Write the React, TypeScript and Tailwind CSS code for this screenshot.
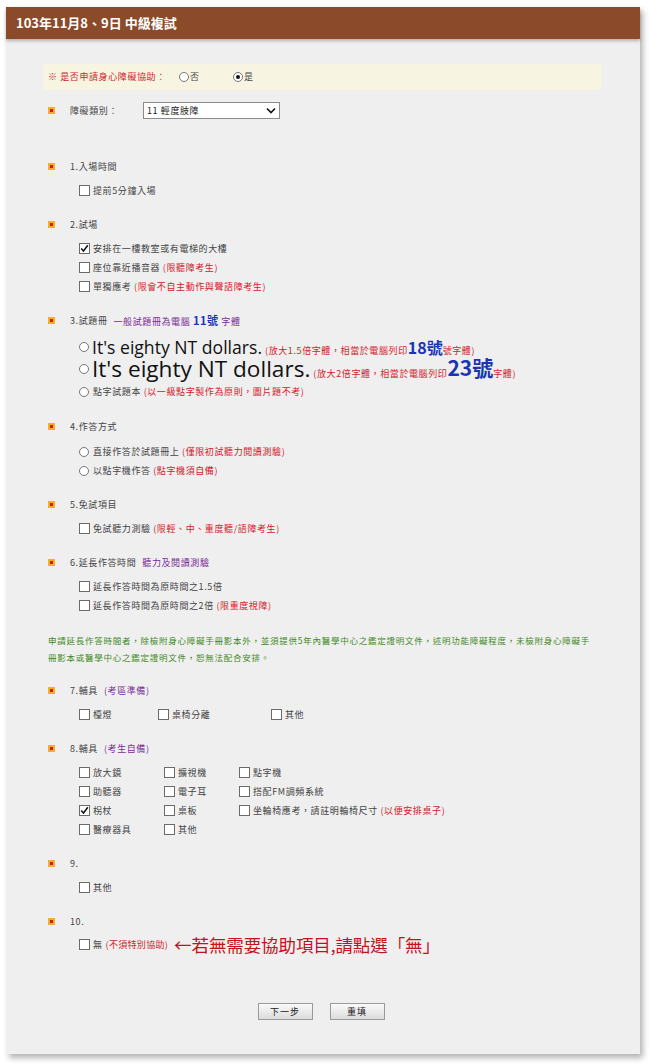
import type { ReactNode } from 'react';

const cjk = "font-['Noto_Sans_CJK_TC','Noto_Sans_CJK_SC',sans-serif]";

function Bullet() {
  return (
    <span className="w-[7px] h-[7px] bg-[#f5ae2a] flex items-center justify-center shrink-0">
      <span className="w-[3px] h-[3px] bg-[#cf1f1a]" />
    </span>
  );
}

function Box({ checked = false }: { checked?: boolean }) {
  return (
    <span className="w-[11px] h-[11px] border border-[#6b6b6b] bg-white shrink-0 flex items-center justify-center">
      {checked && (
        <svg width="9" height="9" viewBox="0 0 9 9">
          <path d="M1.2 4.6 L3.5 7 L7.8 1.2" fill="none" stroke="#111" strokeWidth="1.5" />
        </svg>
      )}
    </span>
  );
}

function Radio({ checked = false }: { checked?: boolean }) {
  return (
    <span className="w-[10px] h-[10px] rounded-full border border-[#777] bg-white shrink-0 flex items-center justify-center">
      {checked && <span className="w-[4px] h-[4px] rounded-full bg-[#111]" />}
    </span>
  );
}

function Note({ children }: { children: ReactNode }) {
  return <span className="text-[#d3202a]">{children}</span>;
}

function Title({ children }: { children: ReactNode }) {
  return (
    <div className="h-[19px] flex items-center pl-[5px]">
      <Bullet />
      <span className="ml-[15px] text-[#444] flex items-center gap-[6px]">{children}</span>
    </div>
  );
}

function Item({ checked, children }: { checked?: boolean; children: ReactNode }) {
  return (
    <div className="h-[19px] flex items-center pl-[36px]">
      <Box checked={checked} />
      <span className="ml-[3px]">{children}</span>
    </div>
  );
}

function RadioItem({ children }: { children: ReactNode }) {
  return (
    <div className="h-[19px] flex items-center pl-[36px]">
      <Radio />
      <span className="ml-[4px]">{children}</span>
    </div>
  );
}

function Cell({ w, checked, children }: { w: string; checked?: boolean; children: ReactNode }) {
  return (
    <div className={`flex items-center ${w}`}>
      <Box checked={checked} />
      <span className="ml-[3px]">{children}</span>
    </div>
  );
}

export default function App() {
  return (
    <div className={`bg-white min-h-[1064px] pl-[6px] pt-[7px] ${cjk}`}>
      <div className="w-[634px] bg-[#efefef] shadow-[3px_4px_6px_rgba(0,0,0,0.3)] pb-[34px] text-[9px] tracking-[0.6px] text-[#444]">
        <div className="h-[32px] bg-[#8b4a29] flex items-center pl-[10px] shadow-[0_2px_3px_rgba(0,0,0,0.25)]">
          <span className="text-white text-[13px] font-bold tracking-normal">103年11月8、9日 中級複試</span>
        </div>

        <div className="pl-[37px] pr-[39px]">
          <div className="mt-[25px] h-[26px] bg-[#f7f5e1] flex items-center pl-[5px]">
            <span className="text-[#d3202a] w-[131px]">※ 是否申請身心障礙協助：</span>
            <span className="flex items-center w-[54px]">
              <Radio />
              <span className="ml-[1px]">否</span>
            </span>
            <span className="flex items-center">
              <Radio checked />
              <span className="ml-[1px]">是</span>
            </span>
          </div>

          <div className="mt-[11px] h-[19px] flex items-center pl-[5px]">
            <Bullet />
            <span className="ml-[15px] w-[73px]">障礙類別：</span>
            <div className="w-[137px] h-[17px] bg-white border border-[#8a8a8a] flex items-center justify-between pl-[3px] pr-[3px] text-[#222]">
              <span>11 輕度肢障</span>
              <svg width="10" height="7" viewBox="0 0 10 7">
                <path d="M1 1.5 L5 5.5 L9 1.5" fill="none" stroke="#111" strokeWidth="1.6" />
              </svg>
            </div>
          </div>

          <div className="mt-[37px]">
            <Title>1.入場時間</Title>
            <div className="mt-[5px]">
              <Item>提前5分鐘入場</Item>
            </div>
          </div>

          <div className="mt-[15px]">
            <Title>2.試場</Title>
            <div className="mt-[5px]">
              <Item checked>安排在一樓教室或有電梯的大樓</Item>
              <Item>座位靠近播音器 <Note>(限聽障考生)</Note></Item>
              <Item>單獨應考 <Note>(限會不自主動作與聲語障考生)</Note></Item>
            </div>
          </div>

          <div className="mt-[15px]">
            <Title>
              <span>3.試題冊</span>
              <span className="text-[#7a2c96]">
                一般試題冊為電腦 <span className="text-[#1a34b4] font-bold text-[11px]">11號</span> 字體
              </span>
            </Title>
            <div className="mt-[6px]">
              <div className="h-[22px] flex items-center pl-[36px]">
                <Radio />
                <span className="ml-[3px] font-['Open_Sans',sans-serif] text-[17.6px] leading-[18px] tracking-normal text-[#111]">It's eighty NT dollars.</span>
                <span className="text-[#d3202a] ml-[3px] self-end mb-[3px] flex items-end leading-none">
                  (放大1.5倍字體，相當於電腦列印<span className="text-[#1a34b4] font-bold text-[16px] leading-none tracking-normal">18號</span>號字體)
                </span>
              </div>
              <div className="h-[22px] flex items-center pl-[36px]">
                <Radio />
                <span className="ml-[3px] font-['Open_Sans',sans-serif] text-[22.6px] leading-[22px] tracking-normal text-[#111]">It's eighty NT dollars.</span>
                <span className="text-[#d3202a] ml-[3px] self-end mb-[2px] flex items-end leading-none">
                  (放大2倍字體，相當於電腦列印<span className="text-[#1a34b4] font-bold text-[21px] leading-none tracking-normal">23號</span>字體)
                </span>
              </div>
              <div className="h-[24px] flex items-center pl-[36px]">
                <Radio />
                <span className="ml-[4px]">點字試題本 <Note>(以一級點字製作為原則，圖片題不考)</Note></span>
              </div>
            </div>
          </div>

          <div className="mt-[13px]">
            <Title>4.作答方式</Title>
            <div className="mt-[6px]">
              <RadioItem>直接作答於試題冊上 <Note>(僅限初試聽力閱讀測驗)</Note></RadioItem>
              <RadioItem>以點字機作答 <Note>(點字機須自備)</Note></RadioItem>
            </div>
          </div>

          <div className="mt-[15px]">
            <Title>5.免試項目</Title>
            <div className="mt-[5px]">
              <Item>免試聽力測驗 <Note>(限輕、中、重度聽/語障考生)</Note></Item>
            </div>
          </div>

          <div className="mt-[15px]">
            <Title>
              <span>6.延長作答時間</span>
              <span className="text-[#7a2c96]">聽力及閱讀測驗</span>
            </Title>
            <div className="mt-[5px]">
              <Item>延長作答時間為原時間之1.5倍</Item>
              <Item>延長作答時間為原時間之2倍 <Note>(限重度視障)</Note></Item>
            </div>
            <p className="mt-[17px] pl-[5px] leading-[17px] text-[#3f8a1e] text-[8.5px] tracking-[0.75px]">
              申請延長作答時間者，除檢附身心障礙手冊影本外，並須提供5年內醫學中心之鑑定證明文件，述明功能障礙程度，未檢附身心障礙手
              <br />
              冊影本或醫學中心之鑑定證明文件，恕無法配合安排。
            </p>
          </div>

          <div className="mt-[15px]">
            <Title>
              <span>7.輔具</span>
              <span className="text-[#7a2c96]">(考區準備)</span>
            </Title>
            <div className="mt-[5px] h-[19px] flex items-center pl-[36px]">
              <Cell w="w-[79px]">檯燈</Cell>
              <Cell w="w-[113px]">桌椅分離</Cell>
              <Cell w="">其他</Cell>
            </div>
          </div>

          <div className="mt-[15px]">
            <Title>
              <span>8.輔具</span>
              <span className="text-[#7a2c96]">(考生自備)</span>
            </Title>
            <div className="mt-[5px] pl-[36px]">
              <div className="h-[19px] flex items-center">
                <Cell w="w-[85px]">放大鏡</Cell>
                <Cell w="w-[75px]">擴視機</Cell>
                <Cell w="">點字機</Cell>
              </div>
              <div className="h-[19px] flex items-center">
                <Cell w="w-[85px]">助聽器</Cell>
                <Cell w="w-[75px]">電子耳</Cell>
                <Cell w="">搭配FM調頻系統</Cell>
              </div>
              <div className="h-[19px] flex items-center">
                <Cell w="w-[85px]" checked>柺杖</Cell>
                <Cell w="w-[75px]">桌板</Cell>
                <Cell w="">坐輪椅應考，請註明輪椅尺寸 <Note>(以便安排桌子)</Note></Cell>
              </div>
              <div className="h-[19px] flex items-center">
                <Cell w="w-[85px]">醫療器具</Cell>
                <Cell w="w-[75px]">其他</Cell>
              </div>
            </div>
          </div>

          <div className="mt-[15px]">
            <Title>9.</Title>
            <div className="mt-[5px]">
              <Item>其他</Item>
            </div>
          </div>

          <div className="mt-[15px]">
            <Title>10.</Title>
            <div className="mt-[4px] h-[19px] flex items-center pl-[36px]">
              <Box />
              <span className="ml-[3px]">無</span>
              <span className="text-[#d3202a] ml-[3px] tracking-[0.3px]">(不須特別協助)</span>
              <span className="ml-[6px] text-[#c8101c] text-[17.5px] tracking-[-0.1px] leading-none">←若無需要協助項目,請點選「無」</span>
            </div>
          </div>

          <div className="mt-[49px] flex justify-center gap-[17px] pr-[2px]">
            <button className="w-[55px] h-[17px] border border-[#9a9a9a] bg-gradient-to-b from-[#fafafa] to-[#dcdcdc] text-[9px] tracking-[1px] text-[#222] flex items-center justify-center">下一步</button>
            <button className="w-[55px] h-[17px] border border-[#9a9a9a] bg-gradient-to-b from-[#fafafa] to-[#dcdcdc] text-[9px] tracking-[1px] text-[#222] flex items-center justify-center">重填</button>
          </div>
        </div>
      </div>
    </div>
  );
}
